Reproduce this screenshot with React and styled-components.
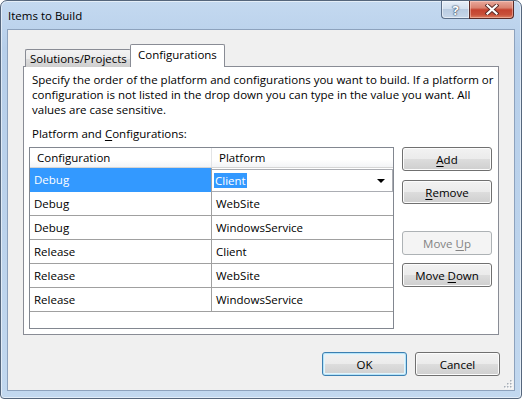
import React from 'react';
import styled, { createGlobalStyle, css } from 'styled-components';

const Global = createGlobalStyle`
  html, body { margin: 0; padding: 0; background: #ffffff; }
  body {
    font-family: "Open Sans", "Noto Sans", sans-serif;
    font-size: 11.5px;
    color: #000;
  }
  #root { width: 522px; height: 399px; }
  * { box-sizing: border-box; }
`;

const Window = styled.div`
  width: 522px;
  height: 399px;
  border: 1px solid #55667c;
  border-radius: 7px 7px 4px 4px;
  background: linear-gradient(180deg, #c4d9f0 0%, #b7cfea 12%, #bcd3ec 60%, #c2d8ef 100%);
  box-shadow: inset 0 0 0 1px rgba(255, 255, 255, 0.55);
  display: flex;
  flex-direction: column;
`;

const TitleBar = styled.div`
  height: 28px;
  display: flex;
  align-items: flex-start;
  flex-shrink: 0;
`;

const Title = styled.div`
  padding: 7px 0 0 7px;
  line-height: 15px;
  font-size: 11.5px;
  color: #000;
`;

const CaptionButtons = styled.div`
  margin-left: auto;
  margin-right: 7px;
  display: flex;
`;

const HelpButton = styled.div`
  width: 28px;
  height: 18px;
  border: 1px solid #5b6e88;
  border-top: none;
  border-right: none;
  border-radius: 0 0 0 4px;
  background: linear-gradient(180deg, #e6eef8 0%, #d3e0ef 45%, #b9cbe1 50%, #c7d7ea 100%);
  box-shadow: inset 0 0 0 1px rgba(255, 255, 255, 0.5);
  display: flex;
  align-items: center;
  justify-content: center;
  font-weight: bold;
  font-size: 13px;
  color: #ffffff;
  text-shadow: 0 0 1px #3d4d63, 0 0 1px #3d4d63, 0 0 2px #3d4d63;
`;

const CloseButton = styled.div`
  width: 45px;
  height: 18px;
  border: 1px solid #5a2b27;
  border-top: none;
  border-radius: 0 0 4px 0;
  background: linear-gradient(180deg, #e9a99c 0%, #d98270 40%, #c4422f 52%, #c8503a 80%, #dc7f62 100%);
  box-shadow: inset 0 0 0 1px rgba(255, 220, 210, 0.45);
  display: flex;
  align-items: center;
  justify-content: center;
`;

const Client = styled.div`
  position: relative;
  flex: 1;
  margin: 0 6px 7px 6px;
  border: 1px solid #8da2bd;
  background: #f0f0f0;
  display: flex;
  flex-direction: column;
  padding: 14px 15px 14px 15px;
`;

const TabStrip = styled.div`
  display: flex;
  align-items: flex-end;
  height: 23px;
  padding-left: 2px;
  margin-bottom: -1px;
  position: relative;
  z-index: 1;
`;

const Tab = styled.div`
  border: 1px solid #898c95;
  border-bottom: none;
  border-radius: 2px 2px 0 0;
  display: flex;
  align-items: center;
  white-space: nowrap;
  ${(p) =>
    p.$active
      ? css`
          height: 23px;
          width: 95px;
          margin-left: -1px;
          padding: 0 0 3px 7px;
          background: #ffffff;
        `
      : css`
          height: 18px;
          width: 106px;
          padding: 0 0 0 4px;
          border-right: none;
          background: linear-gradient(180deg, #f3f3f3 0%, #ebebeb 50%, #dddddd 51%, #cfcfcf 100%);
        `}
`;

const Panel = styled.div`
  flex: 1;
  border: 1px solid #898c95;
  background: #ffffff;
  display: flex;
  flex-direction: column;
  padding: 5px 6px 5px 5px;
`;

const Description = styled.div`
  line-height: 15px;
  padding-left: 3px;
  white-space: nowrap;
`;

const Label = styled.div`
  line-height: 15px;
  margin-top: 9px;
  padding-left: 3px;
`;

const Body = styled.div`
  margin-top: 6px;
  display: flex;
  gap: 8px;
`;

const GridView = styled.div`
  width: 365px;
  height: 182px;
  border: 1px solid #828790;
  background: #ffffff;
  display: flex;
  flex-direction: column;
`;

const HeaderRow = styled.div`
  display: grid;
  grid-template-columns: 182px 1fr;
  height: 20px;
  border-bottom: 1px solid #d5d5d5;
  background: linear-gradient(180deg, #ffffff 0%, #ffffff 60%, #f3f4f6 100%);
`;

const HeaderCell = styled.div`
  padding-left: 7px;
  line-height: 19px;
  border-right: ${(p) => (p.$last ? 'none' : '1px solid #e3e4e6')};
`;

const Row = styled.div`
  display: grid;
  grid-template-columns: 182px 1fr;
  height: 24px;
  border-bottom: 1px solid #a0a0a0;
`;

const Cell = styled.div`
  padding-left: 4px;
  line-height: 23px;
  border-right: ${(p) => (p.$last ? 'none' : '1px solid #a0a0a0')};
  ${(p) =>
    p.$selected &&
    css`
      background: #3399ff;
      color: #ffffff;
    `}
`;

const Combo = styled.div`
  margin: 1px 0 0 0;
  height: 23px;
  border: 1px solid #abadb3;
  border-left: none;
  background: #ffffff;
  display: flex;
  align-items: center;
  padding: 0 4px 0 2px;
`;

const Highlight = styled.span`
  background: #3399ff;
  color: #ffffff;
  line-height: 15px;
  padding: 0 1px;
`;

const Arrow = styled.span`
  margin-left: auto;
  width: 0;
  height: 0;
  border-left: 4px solid transparent;
  border-right: 4px solid transparent;
  border-top: 4px solid #000;
  margin-right: 3px;
`;

const ButtonColumn = styled.div`
  width: 90px;
  display: flex;
  flex-direction: column;
`;

const Button = styled.div`
  width: ${(p) => p.$w || 90}px;
  height: 24px;
  margin-top: ${(p) => p.$mt || 0}px;
  border: 1px solid #707070;
  border-radius: 3px;
  background: linear-gradient(180deg, #f2f2f2 0%, #ebebeb 49%, #dddddd 50%, #cfcfcf 100%);
  box-shadow: inset 0 0 0 1px #fcfcfc;
  display: flex;
  align-items: center;
  justify-content: center;
  color: #000;
  white-space: nowrap;
  ${(p) =>
    p.$disabled &&
    css`
      border-color: #adb2b5;
      background: #f4f4f4;
      box-shadow: none;
      color: #838383;
    `}
  ${(p) =>
    p.$default &&
    css`
      border-color: #3c7fb1;
      box-shadow: inset 0 0 0 1px #b6e3f7, inset 0 0 0 2px #e3f4fc;
    `}
`;

const U = styled.span`
  text-decoration: underline;
  text-underline-offset: 2px;
`;

const Footer = styled.div`
  margin-top: 17px;
  margin-right: -1px;
  display: flex;
  justify-content: flex-end;
  gap: 8px;
`;

const Grip = styled.svg`
  position: absolute;
  right: 1px;
  bottom: 1px;
`;

const rows = [
  ['Debug', 'Client'],
  ['Debug', 'WebSite'],
  ['Debug', 'WindowsService'],
  ['Release', 'Client'],
  ['Release', 'WebSite'],
  ['Release', 'WindowsService'],
];

export default function App() {
  return (
    <>
      <Global />
      <Window>
        <TitleBar>
          <Title>Items to Build</Title>
          <CaptionButtons>
            <HelpButton>?</HelpButton>
            <CloseButton>
              <svg width="14" height="11" viewBox="0 0 14 11">
                <path d="M2.5 1.5 L11.5 9.5 M11.5 1.5 L2.5 9.5" stroke="#5a2b27" strokeWidth="4" strokeLinecap="square" />
                <path d="M2.5 1.5 L11.5 9.5 M11.5 1.5 L2.5 9.5" stroke="#ffffff" strokeWidth="2.2" strokeLinecap="square" />
              </svg>
            </CloseButton>
          </CaptionButtons>
        </TitleBar>
        <Client>
          <TabStrip>
            <Tab>Solutions/Projects</Tab>
            <Tab $active>Configurations</Tab>
          </TabStrip>
          <Panel>
            <Description>
              Specify the order of the platform and configurations you want to build. If a platform or
              <br />
              configuration is not listed in the drop down you can type in the value you want. All
              <br />
              values are case sensitive.
            </Description>
            <Label>
              Platform and <U>C</U>onfigurations:
            </Label>
            <Body>
              <GridView>
                <HeaderRow>
                  <HeaderCell>Configuration</HeaderCell>
                  <HeaderCell $last>Platform</HeaderCell>
                </HeaderRow>
                {rows.map(([cfg, plat], i) => (
                  <Row key={i}>
                    <Cell $selected={i === 0}>{cfg}</Cell>
                    {i === 0 ? (
                      <Combo>
                        <Highlight>{plat}</Highlight>
                        <Arrow />
                      </Combo>
                    ) : (
                      <Cell $last>{plat}</Cell>
                    )}
                  </Row>
                ))}
              </GridView>
              <ButtonColumn>
                <Button>
                  <U>A</U>dd
                </Button>
                <Button $mt={9}>
                  <U>R</U>emove
                </Button>
                <Button $mt={27} $disabled>
                  Move&nbsp;<U>U</U>p
                </Button>
                <Button $mt={8}>
                  Move&nbsp;<U>D</U>own
                </Button>
              </ButtonColumn>
            </Body>
          </Panel>
          <Footer>
            <Button $w={85} $default>OK</Button>
            <Button $w={85}>Cancel</Button>
          </Footer>
          <Grip width="10" height="10" viewBox="0 0 10 10">
            {[
              [8, 2], [8, 5], [5, 5], [8, 8], [5, 8], [2, 8],
            ].map(([x, y], i) => (
              <g key={i}>
                <rect x={x} y={y} width="1.5" height="1.5" fill="#ffffff" />
                <rect x={x - 1} y={y - 1} width="1.5" height="1.5" fill="#a6aeb8" />
              </g>
            ))}
          </Grip>
        </Client>
      </Window>
    </>
  );
}
